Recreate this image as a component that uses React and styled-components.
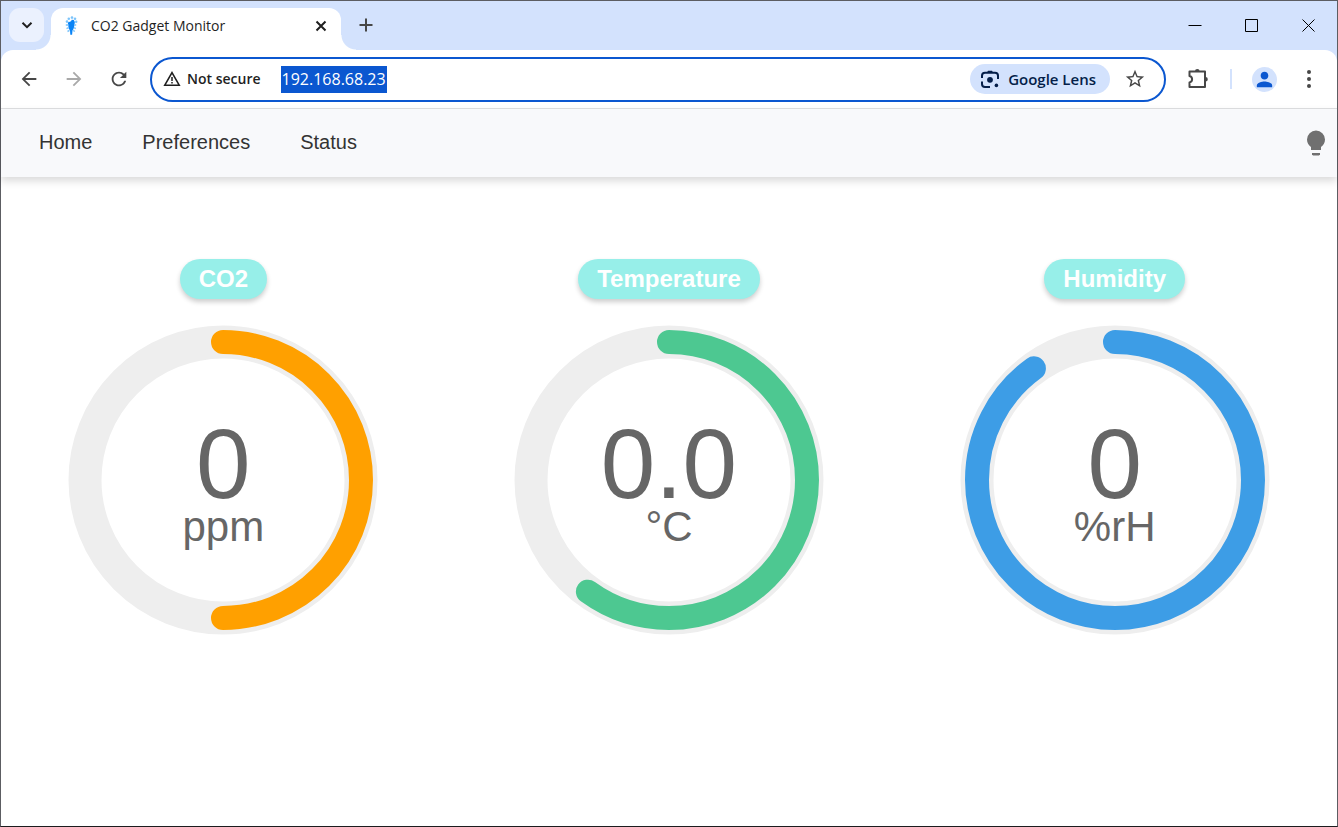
import React from "react";
import styled, { createGlobalStyle } from "styled-components";
import { MdArrowBack, MdArrowForward, MdRefresh, MdStarBorder, MdPerson } from "react-icons/md";

const GlobalStyle = createGlobalStyle`
  *, *::before, *::after { box-sizing: border-box; }
  body { margin: 0; background: #fff; }
  button, input { font: inherit; color: inherit; }
`;

const uiFont = `"Open Sans", "Noto Sans", sans-serif`;
const pageFont = `"Liberation Sans", Arial, sans-serif`;

const Window = styled.div`
  display: flex;
  flex-direction: column;
  min-height: 100vh;
  border: 1px solid #5c5d62;
  border-bottom-color: #1c1c1e;
  background: #d3e2fd;
  font-family: ${uiFont};
`;

const TabStrip = styled.div`
  display: flex;
  align-items: flex-start;
  height: 49px;
  padding-left: 8px;
`;

const IconButton = styled.button`
  display: flex;
  align-items: center;
  justify-content: center;
  flex: none;
  width: ${(p) => p.$width}px;
  height: ${(p) => p.$height || 34}px;
  padding: 0;
  border: 0;
  border-radius: ${(p) => p.$radius || 0}px;
  background: ${(p) => p.$fill || "transparent"};
  color: ${(p) => p.$color || "#474747"};
`;

const TabSearch = styled(IconButton)`
  margin: 7px 7px 0 0;
`;

const Tab = styled.div`
  position: relative;
  display: flex;
  align-items: center;
  width: 290px;
  height: 42px;
  margin-top: 7px;
  padding: 0 8px 7px 12px;
  border-radius: 12px 12px 0 0;
  background: #fff;

  &::before, &::after {
    content: "";
    position: absolute;
    bottom: 0;
    width: 15px;
    height: 15px;
  }
  &::before {
    right: 100%;
    background: radial-gradient(circle at 0 0, transparent 14px, #fff 15px);
  }
  &::after {
    left: 100%;
    background: radial-gradient(circle at 100% 0, transparent 14px, #fff 15px);
  }
`;

const TabTitle = styled.span`
  flex: 1;
  margin-left: 12px;
  color: #1f1f1f;
  font-size: 14px;
  line-height: 20px;
  white-space: nowrap;
`;

const NewTab = styled(IconButton)`
  margin: 7px 0 0 8px;
`;

const WindowControls = styled.div`
  display: flex;
  margin-left: auto;
`;

const Toolbar = styled.div`
  display: flex;
  align-items: center;
  height: 59px;
  padding: 0 8px 0 5px;
  border-bottom: 1px solid #dfe0e2;
  border-radius: 12px 12px 0 0;
  background: #fff;
`;

const AddressBar = styled.div`
  display: flex;
  align-items: center;
  flex: 1;
  min-width: 0;
  height: 45px;
  margin: 0 12px 0 9px;
  padding: 0 12px 0 11px;
  border: 2px solid #0b57d0;
  border-radius: 23px;
`;

const SecurityButton = styled.button`
  display: flex;
  align-items: center;
  gap: 6px;
  flex: none;
  padding: 0;
  border: 0;
  background: none;
  color: #1f1f1f;
  font-size: 14px;
  font-weight: 600;
  line-height: 20px;
`;

const UrlField = styled.label`
  display: flex;
  flex: 1;
  min-width: 0;
  margin-left: 20px;
`;

const UrlInput = styled.input`
  field-sizing: content;
  height: 27px;
  padding: 0 1px;
  border: 0;
  outline: 0;
  background: #0b57d0;
  color: #fff;
  font-size: 16px;
`;

const LensButton = styled.button`
  display: flex;
  align-items: center;
  gap: 8px;
  flex: none;
  height: 30px;
  margin-right: 8px;
  padding: 0 14px 0 10px;
  border: 0;
  border-radius: 15px;
  background: #d3e2fd;
  color: #041e49;
  font-size: 15px;
  font-weight: 600;
`;

const Divider = styled.span`
  width: 2px;
  height: 20px;
  margin: 0 7px 0 12px;
  background: #d3e2fd;
`;

const Avatar = styled.span`
  display: flex;
  align-items: center;
  justify-content: center;
  width: 25px;
  height: 25px;
  border-radius: 50%;
  background: #d3e2fd;
  color: #0b57d0;
`;

const Page = styled.div`
  flex: 1;
  background: #fff;
  font-family: ${pageFont};
`;

const NavBar = styled.nav`
  display: flex;
  align-items: center;
  justify-content: space-between;
  height: 68px;
  padding: 0 9px 0 13px;
  background: #f8f9fb;
  box-shadow: 0 4px 8px rgba(0, 0, 0, 0.15);
`;

const NavLinks = styled.div`
  display: flex;
`;

const NavLink = styled.a`
  padding: 0 25px 2px;
  color: #333;
  font-size: 20px;
  line-height: 24px;
  text-decoration: none;
`;

const Gauges = styled.main`
  display: grid;
  grid-template-columns: repeat(3, 1fr);
  column-gap: 1px;
  padding-top: 82px;
`;

const GaugeCard = styled.section`
  display: flex;
  flex-direction: column;
  align-items: center;
  gap: 26px;
`;

const GaugeTitle = styled.h2`
  margin: 0;
  padding: 0 19px;
  border-radius: 20px;
  background: #97efe9;
  box-shadow: 0 3px 5px rgba(0, 0, 0, 0.2);
  color: #fff;
  font-size: 24px;
  line-height: 40px;
`;

const Dial = styled.div`
  display: grid;
  place-items: center;
  width: 100%;
  max-width: 310px;

  > * { grid-area: 1 / 1; }
`;

const Ring = styled.svg`
  display: block;
  width: 100%;
`;

const Reading = styled.div`
  padding-top: 14px;
  color: #666;
  text-align: center;
`;

const Value = styled.div`
  font-size: 98px;
  line-height: 80px;
`;

const Unit = styled.div`
  font-size: 42px;
  line-height: 46px;
`;

const Stroke = ({ size = 16, width = 2, children }) => (
  <svg width={size} height={size} viewBox={`0 0 ${size} ${size}`} fill="none" stroke="currentColor" strokeWidth={width} aria-hidden="true">
    {children}
  </svg>
);

const Favicon = () => (
  <svg width="16" height="20" viewBox="0 0 16 20" aria-hidden="true">
    <path d="M4.800 6.500 8 5.200l.8-1.400 2 .2 1 2-.4 3.500-.9 3.500-1 1.500-.4 4.200H7.300l-.3-4.200-1.300-2z" fill="#0a84f6" />
    <path d="M2.800 9h2.700M3.500 12.700l2-1M13.200 9h-2M12.800 12.700l-1.700-1M4.500 15.500l2-1.200M11.800 15.500l-1.600-1.200" stroke="#7cc4fb" strokeWidth="1.500" />
    <g fill="#7cc4fb">
      <circle cx="4" cy="5.600" r="1.300" />
      <circle cx="5.800" cy="2.800" r="1.300" />
      <circle cx="9" cy="1.600" r="1.300" />
      <circle cx="12" cy="2.800" r="1.300" />
      <circle cx="13.200" cy="5.800" r="1.200" />
    </g>
  </svg>
);

const WarningIcon = () => (
  <svg width="18" height="18" viewBox="0 0 18 18" aria-hidden="true">
    <path d="M9 2.6 16.2 15.2H1.8z" fill="none" stroke="currentColor" strokeWidth="1.6" />
    <path d="M8.25 7h1.5v4h-1.5zM8.25 12h1.5v1.5h-1.5z" fill="currentColor" />
  </svg>
);

const LensIcon = () => (
  <svg width="20" height="20" viewBox="0 0 20 20" fill="none" stroke="currentColor" strokeWidth="2" aria-hidden="true">
    <path d="M2 9V6.800a3 3 0 0 1 3-3h10a3 3 0 0 1 3 3V10M2 12.500V15a3 3 0 0 0 3 3h5" />
    <path d="M6.800 3.800 8 1.800h4l1.200 2z" fill="currentColor" stroke="none" />
    <circle cx="10" cy="10.800" r="2.900" fill="currentColor" stroke="none" />
    <circle cx="16.400" cy="16.400" r="1.800" fill="currentColor" stroke="none" />
  </svg>
);

const ExtensionIcon = () => (
  <svg width="22" height="22" viewBox="0 0 22 22" aria-hidden="true">
    <path
      d="M2.500 3.500h15.500v15.500h-15.500v-4.500c1.600-.4 2.600-1.600 2.600-3.200s-1-2.900-2.600-3.300z"
      fill="none"
      stroke="currentColor"
      strokeWidth="2"
      strokeLinejoin="round"
    />
    <path d="M8 3.200a2.300 2.300 0 0 1 4.600 0zM18.500 9a2.300 2.300 0 0 1 0 4.600z" fill="currentColor" />
  </svg>
);

const MenuIcon = () => (
  <svg width="6" height="20" viewBox="0 0 6 20" fill="currentColor" aria-hidden="true">
    <circle cx="3" cy="3" r="2" />
    <circle cx="3" cy="10" r="2" />
    <circle cx="3" cy="17" r="2" />
  </svg>
);

const BulbIcon = () => (
  <svg width="24" height="28" viewBox="0 0 24 28" fill="#707070" aria-hidden="true">
    <path d="M12 1.500a9 9 0 0 0-9 9c0 3 1.500 5.600 4 7.400V21h10v-3.100c2.500-1.800 4-4.400 4-7.400a9 9 0 0 0-9-9z" />
    <path d="M8 24h8v1.200l-1 1.200H9l-1-1.200z" />
  </svg>
);

const gauges = [
  { title: "CO2", value: "0", unit: "ppm", color: "#ffa000", percent: 50 },
  { title: "Temperature", value: "0.0", unit: "°C", color: "#4dc891", percent: 60 },
  { title: "Humidity", value: "0", unit: "%rH", color: "#3d9de6", percent: 90 },
];

function Gauge({ title, value, unit, color, percent }) {
  return (
    <GaugeCard>
      <GaugeTitle>{title}</GaugeTitle>
      <Dial>
        <Ring viewBox="0 0 310 310" fill="none" aria-hidden="true">
          <circle cx="155" cy="155" r="138" stroke="#eeeeee" strokeWidth="33" />
          <circle
            cx="155"
            cy="155"
            r="138"
            stroke={color}
            strokeWidth="24"
            strokeLinecap="round"
            pathLength="100"
            strokeDasharray={`${percent} 100`}
            transform="rotate(-90 155 155)"
          />
        </Ring>
        <Reading>
          <Value>{value}</Value>
          <Unit>{unit}</Unit>
        </Reading>
      </Dial>
    </GaugeCard>
  );
}

export default function App() {
  return (
    <>
      <GlobalStyle />
      <Window>
        <TabStrip>
          <TabSearch $width={35} $radius={11} $fill="#ebf1fe" $color="#1f1f1f" aria-label="Search tabs">
            <Stroke><path d="M3.500 5.800 8 10.200l4.500-4.400" /></Stroke>
          </TabSearch>
          <Tab>
            <Favicon />
            <TabTitle>CO2 Gadget Monitor</TabTitle>
            <IconButton $width={24} $height={24} $color="#1f1f1f" aria-label="Close tab">
              <Stroke><path d="m3.500 3.500 9 9m0-9-9 9" /></Stroke>
            </IconButton>
          </Tab>
          <NewTab $width={34} aria-label="New tab">
            <Stroke><path d="M8 1.500v13M1.500 8h13" /></Stroke>
          </NewTab>
          <WindowControls>
            <IconButton $width={57} $height={49} $color="#000" aria-label="Minimize">
              <Stroke size={14} width={1}><path d="M.5 6.500h13" /></Stroke>
            </IconButton>
            <IconButton $width={57} $height={49} $color="#000" aria-label="Maximize">
              <Stroke size={14} width={1}><path d="M.5.500h12v12H.5z" /></Stroke>
            </IconButton>
            <IconButton $width={57} $height={49} $color="#000" aria-label="Close">
              <Stroke size={14} width={1}><path d="m.5.500 12 12m0-12-12 12" /></Stroke>
            </IconButton>
          </WindowControls>
        </TabStrip>

        <Toolbar>
          <IconButton $width={45} aria-label="Back"><MdArrowBack size={22} /></IconButton>
          <IconButton $width={45} $color="#a9a9a9" aria-label="Forward"><MdArrowForward size={22} /></IconButton>
          <IconButton $width={45} aria-label="Reload"><MdRefresh size={22} /></IconButton>
          <AddressBar>
            <SecurityButton><WarningIcon />Not secure</SecurityButton>
            <UrlField>
              <UrlInput type="text" defaultValue="192.168.68.23" aria-label="Address" />
            </UrlField>
            <LensButton><LensIcon />Google Lens</LensButton>
            <IconButton $width={34} aria-label="Bookmark this page"><MdStarBorder size={22} /></IconButton>
          </AddressBar>
          <IconButton $width={40} aria-label="Extensions"><ExtensionIcon /></IconButton>
          <Divider />
          <IconButton $width={50} aria-label="Profile">
            <Avatar><MdPerson size={23} /></Avatar>
          </IconButton>
          <IconButton $width={40} aria-label="Browser menu"><MenuIcon /></IconButton>
        </Toolbar>

        <Page>
          <NavBar>
            <NavLinks>
              <NavLink href="#home">Home</NavLink>
              <NavLink href="#preferences">Preferences</NavLink>
              <NavLink href="#status">Status</NavLink>
            </NavLinks>
            <IconButton $width={24} aria-label="Toggle theme"><BulbIcon /></IconButton>
          </NavBar>
          <Gauges>
            {gauges.map((g) => <Gauge key={g.title} {...g} />)}
          </Gauges>
        </Page>
      </Window>
    </>
  );
}
